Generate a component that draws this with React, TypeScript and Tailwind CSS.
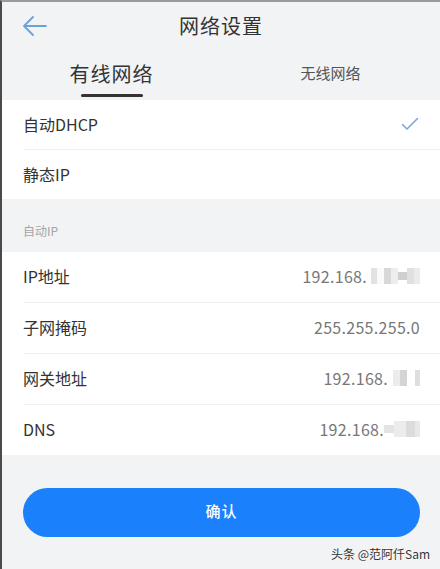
import React from "react";

const font = { fontFamily: '"Noto Sans CJK SC", "Noto Sans", sans-serif' };

function Masked({ cells }: { cells: { w: number; c: string; h?: number }[] }) {
  return (
    <span className="inline-flex items-center h-[20px] blur-[0.6px]">
      {cells.map((cell, i) => (
        <span
          key={i}
          className="inline-block"
          style={{ width: cell.w, height: cell.h ?? 16, background: cell.c }}
        />
      ))}
    </span>
  );
}

function Row({
  label,
  value,
  divider = true,
  tall = true,
}: {
  label: string;
  value: React.ReactNode;
  divider?: boolean;
  tall?: boolean;
}) {
  return (
    <div
      className={
        "relative flex items-center justify-between pl-[21px] pr-[20px] pb-[3px] " +
        (tall ? "h-[51px]" : "h-[50px]")
      }
    >
      <span className="text-[16px] text-[#333]">{label}</span>
      <span className="flex items-center text-[16px] text-[#777] tracking-[0.3px]">{value}</span>
      {divider && (
        <div className="absolute bottom-0 left-[21px] right-0 h-px bg-[#f0f1f3]" />
      )}
    </div>
  );
}

export default function App() {
  return (
    <div
      className="w-[440px] h-[569px] bg-[#f2f3f5] border-l-2 border-l-[#4a4a4a] border-t-2 border-t-[#9a9a9a] flex flex-col overflow-hidden relative"
      style={font}
    >
      {/* header */}
      <div className="relative h-[48px] flex items-center justify-center">
        <svg
          className="absolute left-[20px] top-[13px]"
          width="26"
          height="22"
          viewBox="0 0 26 22"
          fill="none"
          stroke="#6ea2d6"
          strokeWidth="1.8"
          strokeLinecap="round"
          strokeLinejoin="round"
        >
          <path d="M24 11H2M11 2L2 11l9 9" />
        </svg>
        <span className="text-[20px] text-[#333] tracking-[1px] -mt-[1px]">网络设置</span>
      </div>

      {/* tabs */}
      <div className="grid grid-cols-2 h-[50px]">
        <div className="relative flex items-center justify-center">
          <span className="text-[20px] text-[#333] tracking-[1px] -mt-[3px]">有线网络</span>
          <div className="absolute bottom-[3px] left-1/2 -translate-x-1/2 w-[62px] h-[3px] rounded-full bg-[#333]" />
        </div>
        <div className="flex items-center justify-center">
          <span className="text-[15px] text-[#555] -mt-[3px]">无线网络</span>
        </div>
      </div>

      {/* mode selection */}
      <div className="bg-white">
        <div className="relative flex h-[50px] items-center justify-between pl-[21px] pr-[21px] pb-[2px]">
          <span className="text-[16px] text-[#333]">自动DHCP</span>
          <svg width="18" height="14" viewBox="0 0 18 14" fill="none" stroke="#7ea6d2" strokeWidth="1.6" strokeLinecap="round" strokeLinejoin="round">
            <path d="M1.5 7.5L6 12L16.5 1.5" />
          </svg>
          <div className="absolute bottom-0 left-[21px] right-0 h-px bg-[#f0f1f3]" />
        </div>
        <div className="flex h-[49px] items-center pl-[21px] pb-[2px]">
          <span className="text-[16px] text-[#333]">静态IP</span>
        </div>
      </div>

      {/* section label */}
      <div className="h-[53px] flex items-end pl-[21px] pb-[12px]">
        <span className="text-[12px] text-[#a5a5a5]">自动IP</span>
      </div>

      {/* address list */}
      <div className="bg-white">
        <Row
          label="IP地址"
          value={
            <>
              <span>192.168.</span>
              <Masked
                cells={[
                  { w: 4, c: "#fff" },
                  { w: 6, c: "#e2e2e2" },
                  { w: 7, c: "#fafafa" },
                  { w: 7, c: "#d8d8d8" },
                  { w: 7, c: "#ededed" },
                  { w: 9, c: "#cfcfcf", h: 8 },
                  { w: 7, c: "#e0e0e0" },
                  { w: 6, c: "#ebebeb" },
                ]}
              />
            </>
          }
        />
        <Row label="子网掩码" value={<span>255.255.255.0</span>} />
        <Row
          label="网关地址"
          value={
            <>
              <span>192.168.</span>
              <Masked
                cells={[
                  { w: 5, c: "#fff" },
                  { w: 7, c: "#ececec" },
                  { w: 7, c: "#d5d5d5" },
                  { w: 8, c: "#fff" },
                  { w: 5, c: "#dedede" },
                ]}
              />
            </>
          }
        />
        <Row
          label="DNS"
          divider={false}
          tall={false}
          value={
            <>
              <span>192.168.</span>
              <Masked
                cells={[
                  { w: 10, c: "#e4e4e4", h: 8 },
                  { w: 12, c: "#ececec" },
                  { w: 9, c: "#dcdcdc" },
                  { w: 5, c: "#e8e8e8" },
                ]}
              />
            </>
          }
        />
      </div>

      {/* confirm */}
      <div className="pt-[33px] pl-[21px] pr-[20px]">
        <button className="w-full h-[49px] rounded-full bg-[#1a80fb] text-white text-[15px] font-medium tracking-[1px] pb-[2px]">
          确认
        </button>
      </div>

      <div className="absolute right-[10px] bottom-[6px] text-[12px] text-[#333]" style={{ textShadow: "0 0 2px #fff" }}>
        头条 @范阿仟Sam
      </div>
    </div>
  );
}
